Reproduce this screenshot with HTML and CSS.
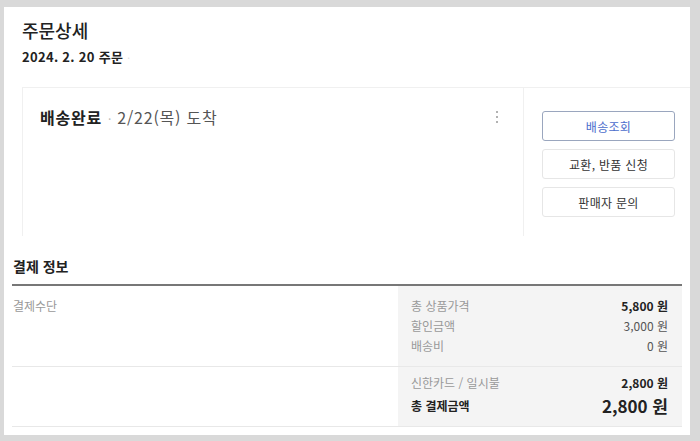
FILE: index.html
```html
<!DOCTYPE html>
<html lang="ko">
<head>
<meta charset="utf-8">
<title>주문상세</title>
<link rel="stylesheet" href="styles.css">
</head>
<body>
<div class="panel">
  <div class="head">
    <h1 class="title">주문상세</h1>
    <div class="date">2024. 2. 20 주문 <span class="faint">·</span></div>
  </div>
  <div class="card">
    <div class="card-main">
      <div class="status-row">
        <div class="status"><b>배송완료</b><span class="sep">·</span><span class="arrive">2/22(목) 도착</span></div>
        <div class="kebab"><i></i><i></i><i></i></div>
      </div>
    </div>
    <div class="card-side">
      <button class="btn btn-primary">배송조회</button>
      <button class="btn">교환, 반품 신청</button>
      <button class="btn">판매자 문의</button>
    </div>
  </div>
  <div class="pay">
    <h2 class="pay-title">결제 정보</h2>
    <div class="pay-row">
      <div class="pay-left">결제수단</div>
      <div class="pay-box">
        <div class="line"><span>총 상품가격</span><span class="v-bold">5,800 원</span></div>
        <div class="line"><span>할인금액</span><span class="v">3,000 원</span></div>
        <div class="line"><span>배송비</span><span class="v">0 원</span></div>
      </div>
    </div>
    <div class="pay-row">
      <div class="pay-left"></div>
      <div class="pay-box pay-box2">
        <div class="line"><span>신한카드 / 일시불</span><span class="v-bold">2,800 원</span></div>
        <div class="line total"><span class="t-label">총 결제금액</span><span class="t-value">2,800 원</span></div>
      </div>
    </div>
  </div>
</div>
</body>
</html>
```

FILE: styles.css
```css
* { box-sizing: border-box; }
html, body { margin: 0; padding: 0; }
body {
  background: #d9d9d9;
  font-family: "Noto Sans CJK KR", "Noto Sans", sans-serif;
  color: #222;
  width: 700px;
  height: 441px;
  overflow: hidden;
}
.panel {
  margin: 7px 10px 0 4px;
  width: 686px;
  height: 428px;
  background: #fff;
  padding-top: 10px;
  overflow: hidden;
}
.head { padding-left: 18px; }
.title {
  margin: 0;
  font-size: 18px;
  line-height: 26px;
  font-weight: 500;
  color: #222;
}
.date {
  margin-top: 4px;
  font-size: 13px;
  line-height: 20px;
  font-weight: 700;
  color: #222;
  letter-spacing: 0.3px;
}
.faint { color: #ddd; font-weight: 400; font-size: 10px; }
.card {
  margin: 19px 0 0 18px;
  height: 149px;
  border: 1px solid #f0f0f0;
  border-bottom: none;
  border-right: none;
  display: flex;
}
.card-main {
  flex: 1;
  padding: 17px 25px 0 17px;
}
.status-row {
  display: flex;
  justify-content: space-between;
  align-items: flex-start;
}
.status {
  font-size: 16px;
  line-height: 24px;
  color: #222;
  letter-spacing: 0.8px;
}
.status b { font-weight: 700; }
.sep { color: #bbb; font-size: 12px; margin: 0 5px 0 6px; }
.arrive { color: #555; }
.kebab {
  display: flex;
  flex-direction: column;
  gap: 3px;
  padding-top: 6px;
}
.kebab i {
  display: block;
  width: 2px;
  height: 2px;
  border-radius: 1px;
  background: #999;
}
.card-side {
  width: 167px;
  border-left: 1px solid #f0f0f0;
  padding: 23px 15px 0 18px;
  display: flex;
  flex-direction: column;
  gap: 8px;
}
.btn {
  width: 133px;
  height: 30px;
  background: #fff;
  border: 1px solid #e6e6e6;
  border-radius: 3px;
  font-family: inherit;
  font-size: 12px;
  color: #333;
  padding: 0;
  letter-spacing: 0.3px;
}
.btn-primary {
  border-color: #9aa6be;
  color: #4b6ccc;
}
.pay {
  margin-top: 20px;
  padding: 0 8px;
}
.pay-title {
  margin: 0;
  font-size: 14px;
  line-height: 20px;
  font-weight: 700;
  padding: 0 0 8px 1px;
  border-bottom: 2px solid #777;
}
.pay-row {
  display: flex;
  border-bottom: 1px solid #e8e8e8;
}
.pay-left {
  flex: 1;
  font-size: 12px;
  line-height: 20px;
  color: #999;
  padding: 10px 0 0 1px;
}
.pay-box {
  width: 284px;
  background: #f4f4f4;
  padding: 10px 14px 10px 13px;
}
.pay-box2 { padding: 6px 14px 7px 13px; }
.line {
  display: flex;
  justify-content: space-between;
  align-items: center;
  font-size: 12px;
  line-height: 20px;
  color: #999;
}
.v { color: #555; }
.v-bold { color: #222; font-weight: 700; }
.total { height: 26px; }
.t-label { color: #222; font-weight: 700; }
.t-value { color: #222; font-weight: 700; font-size: 17px; line-height: 26px; }
```
